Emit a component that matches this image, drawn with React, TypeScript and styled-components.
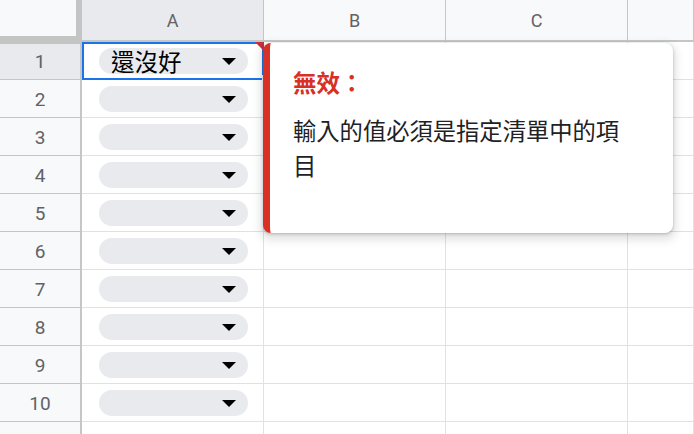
import React from "react";
import styled, { createGlobalStyle } from "styled-components";

const Global = createGlobalStyle`
  html, body { margin: 0; padding: 0; background: #fff; }
  body { font-family: Roboto, "Noto Sans", "Noto Sans CJK TC", sans-serif; }
  * { box-sizing: border-box; }
`;

const Page = styled.div`
  position: relative;
  width: 694px;
  height: 434px;
  overflow: hidden;
  background: #fff;
`;

const Grid = styled.div`
  display: grid;
  grid-template-columns: 82px 182px 182px 182px 1fr;
  grid-template-rows: 42px repeat(11, 38px);
`;

const Corner = styled.div`
  background: #f8f9fa;
  border-right: 6px solid #c4c4c4;
  border-bottom: 6px solid #c4c4c4;
  height: 42px;
  position: relative;
  &::after {
    content: "";
    position: absolute;
    left: 0;
    right: -6px;
    bottom: -8px;
    height: 2px;
    background: #c4c4c4;
  }
`;

const ColHeader = styled.div<{ $active?: boolean }>`
  background: ${(p) => (p.$active ? "#e8eaed" : "#f8f9fa")};
  border-right: 1px solid #c4c7c5;
  border-bottom: 2px solid #c4c7c5;
  display: flex;
  align-items: center;
  justify-content: center;
  color: #5f6368;
  font-family: Roboto, Arial, sans-serif;
  font-size: 18px;
`;

const RowHeader = styled.div<{ $active?: boolean }>`
  background: ${(p) => (p.$active ? "#e8eaed" : "#f8f9fa")};
  border-right: 2px solid #c4c7c5;
  border-bottom: 1px solid #c4c7c5;
  display: flex;
  align-items: center;
  justify-content: center;
  color: #5f6368;
  font-family: Roboto, Arial, sans-serif;
  font-size: 19px;
  padding-top: 1px;
`;

const Cell = styled.div`
  position: relative;
  border-right: 1px solid #e1e1e1;
  border-bottom: 1px solid #e1e1e1;
  display: flex;
  align-items: center;
`;

const Chip = styled.div`
  margin-left: 17px;
  margin-top: 1px;
  width: 149px;
  height: 26px;
  border-radius: 13px;
  background: #e8eaed;
  display: flex;
  align-items: center;
  padding: 0 12px 0 12px;
  font-family: "Noto Sans CJK TC", "Noto Sans", sans-serif;
  font-size: 23.5px;
  color: #000;
`;

const ChipText = styled.span`
  flex: 1;
  line-height: 26px;
  white-space: nowrap;
`;

const Selection = styled.div`
  position: absolute;
  left: 0;
  top: 0;
  right: -1px;
  bottom: -1px;
  border: 2px solid #1a73e8;
  pointer-events: none;
`;

const FillHandle = styled.div`
  position: absolute;
  right: -8px;
  bottom: -5px;
  width: 9px;
  height: 9px;
  background: #1a73e8;
  border: 1px solid #fff;
`;

const InvalidMark = styled.div`
  position: absolute;
  top: 0;
  right: -1px;
  width: 0;
  height: 0;
  border-top: 9px solid #c5303b;
  border-left: 9px solid transparent;
`;

const Popup = styled.div`
  position: absolute;
  left: 263px;
  top: 43px;
  width: 410px;
  height: 190px;
  background: #fff;
  border-left: 7px solid #d93025;
  border-radius: 8px;
  box-shadow: 0 1px 3px rgba(60, 64, 67, 0.3), 0 4px 8px 3px rgba(60, 64, 67, 0.15);
  padding: 22px 0 0 23px;
  font-family: "Noto Sans CJK TC", "Noto Sans", sans-serif;
`;

const PopupTitle = styled.div`
  color: #d93025;
  font-weight: 700;
  font-size: 23.5px;
  line-height: 35px;
`;

const PopupBody = styled.div`
  margin-top: 13px;
  width: 340px;
  color: #202124;
  font-size: 23.3px;
  line-height: 35px;
`;

const Arrow = () => (
  <svg width="14" height="7" viewBox="0 0 14 7">
    <path d="M0 0 L14 0 L7 7 Z" fill="#000" />
  </svg>
);

const cols = ["A", "B", "C", ""];
const rows = Array.from({ length: 11 }, (_, i) => i + 1);

export default function App() {
  return (
    <Page>
      <Global />
      <Grid>
        <Corner />
        {cols.map((c, i) => (
          <ColHeader key={i} $active={c === "A"}>
            {c}
          </ColHeader>
        ))}
        {rows.map((r) => (
          <React.Fragment key={r}>
            <RowHeader $active={r === 1}>{r <= 10 ? r : ""}</RowHeader>
            <Cell>
              {r <= 10 && (
                <Chip>
                  <ChipText>{r === 1 ? "還沒好" : ""}</ChipText>
                  <Arrow />
                </Chip>
              )}
              {r === 1 && (
                <>
                  <Selection />
                  <InvalidMark />
                  <FillHandle />
                </>
              )}
            </Cell>
            <Cell />
            <Cell />
            <Cell />
          </React.Fragment>
        ))}
      </Grid>
      <Popup>
        <PopupTitle>無效：</PopupTitle>
        <PopupBody>輸入的值必須是指定清單中的項目</PopupBody>
      </Popup>
    </Page>
  );
}
